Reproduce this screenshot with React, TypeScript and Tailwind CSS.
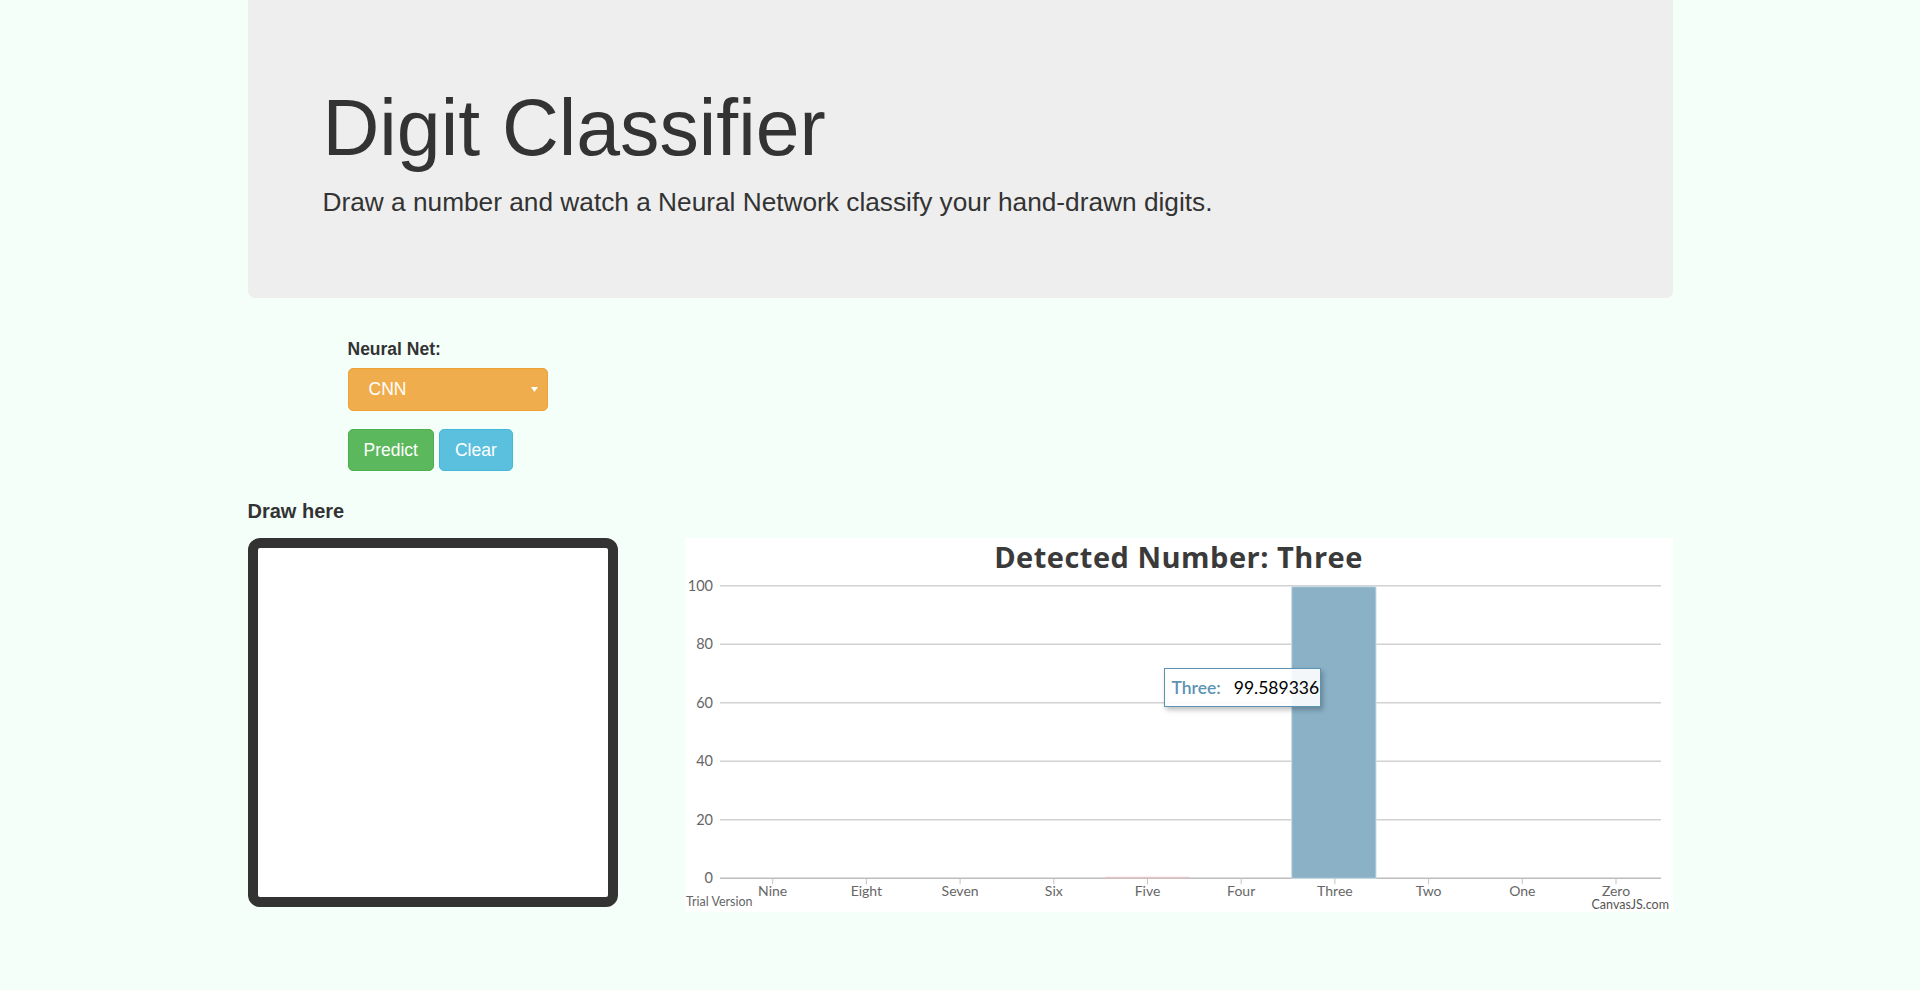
const categories = ['Nine', 'Eight', 'Seven', 'Six', 'Five', 'Four', 'Three', 'Two', 'One', 'Zero']
const yTicks = [100, 80, 60, 40, 20, 0]

// chart geometry (local to the 988x374 chart box)
const zeroY = 340.3
const unit = 2.926
const firstX = 87.7
const step = 93.7

function PredictionChart() {
  return (
    <div className="relative ml-[67px] h-[374px] w-[988px] bg-white">
      <svg width="988" height="374" viewBox="0 0 988 374" className="block">
        {/* grid + y labels */}
        {yTicks.map((v) => {
          const y = zeroY - v * unit
          return (
            <g key={v}>
              <line
                x1="35"
                x2="976"
                y1={y}
                y2={y}
                stroke={v === 0 ? '#bdbdbd' : '#d2d2d2'}
                strokeWidth="1.5"
              />
              <text
                x="28"
                y={y + 5}
                textAnchor="end"
                fill="#666"
                fontFamily="Lato, sans-serif"
                fontSize="14.5"
              >
                {v}
              </text>
            </g>
          )
        })}

        {/* tiny bar for Five */}
        <rect x={firstX + 4 * step - 42} y={zeroY - 1.5} width="84" height="1.5" fill="#e6c4c8" />

        {/* bar for Three */}
        <rect
          x="606.7"
          y="48.7"
          width="84.3"
          height={zeroY - 48.7}
          fill="#8ab1c6"
          stroke="#c9dde7"
          strokeWidth="1"
        />

        {/* ticks + x labels */}
        {categories.map((c, i) => {
          const x = firstX + i * step
          return (
            <g key={c}>
              <line x1={x} x2={x} y1={zeroY} y2={zeroY + 6} stroke="#c4c4c4" strokeWidth="1" />
              <text
                x={x}
                y="357.7"
                textAnchor="middle"
                fill="#666"
                fontFamily="Lato, sans-serif"
                fontSize="14"
              >
                {c}
              </text>
            </g>
          )
        })}

        <text x="1" y="368.3" fill="#666" fontFamily="Lato, sans-serif" fontSize="12.5">
          Trial Version
        </text>
        <text
          x="984"
          y="371"
          textAnchor="end"
          fill="#555"
          fontFamily="Lato, sans-serif"
          fontSize="12.5"
        >
          CanvasJS.com
        </text>
      </svg>

      {/* title */}
      <div className="absolute inset-x-0 top-[6px] text-center font-['Open_Sans',sans-serif] text-[29px] font-bold leading-[26px] tracking-[0.5px] text-[#3a3a3a]">
        Detected Number: Three
      </div>

      {/* tooltip */}
      <div className="absolute left-[479px] top-[130px] flex h-[39px] w-[157px] items-center border border-[#5b93b3] bg-white/90 pl-[7px] font-['Lato',sans-serif] text-[17.5px] shadow-[2px_3px_5px_rgba(0,0,0,0.25)]">
        <span className="font-semibold text-[#5b93b3]">Three:</span>
        <span className="ml-[13px] text-black">99.589336</span>
      </div>
    </div>
  )
}

export default function App() {
  return (
    <div className="min-h-screen bg-[#f5fffa] font-['Liberation_Sans',Arial,sans-serif] text-[#333]">
      <div className="mx-auto w-[1425px]">
        {/* Jumbotron */}
        <div className="h-[298px] rounded-b-[7px] bg-[#eee] pl-[75px] pt-[85px]">
          <h1 className="text-[78.75px] font-normal leading-[1.1]">Digit Classifier</h1>
          <p className="mt-[12.5px] text-[26.25px] leading-[37.5px]">
            Draw a number and watch a Neural Network classify your hand-drawn digits.
          </p>
        </div>

        {/* Controls */}
        <div className="ml-[100px] mt-[39px]">
          <label className="block text-[17.5px] font-bold leading-[25px]">Neural Net:</label>
          <div className="mt-[6.3px] flex h-[42.5px] w-[200px] items-center justify-between rounded-[5px] border border-[#eea236] bg-[#f0ad4e] pl-[20px] pr-[9px] text-[17.5px] text-white">
            <span>CNN</span>
            <svg width="7" height="5" viewBox="0 0 7 5">
              <path d="M0 0 L7 0 L3.5 5 Z" fill="#fff" />
            </svg>
          </div>
          <div className="mt-[18px] flex gap-[5px]">
            <button className="h-[42.5px] rounded-[5px] border border-[#4cae4c] bg-[#5cb85c] px-[15px] text-[17.5px] text-white">
              Predict
            </button>
            <button className="h-[42.5px] rounded-[5px] border border-[#46b8da] bg-[#5bc0de] px-[15px] text-[17.5px] text-white">
              Clear
            </button>
          </div>
        </div>

        <div className="mt-[26px] text-[20px] font-bold leading-[28px]">Draw here</div>

        <div className="mt-[13px] flex items-start">
          <div className="h-[369px] w-[370px] rounded-[12px] border-[10px] border-[#333] bg-white" />
          <PredictionChart />
        </div>
      </div>
    </div>
  )
}
